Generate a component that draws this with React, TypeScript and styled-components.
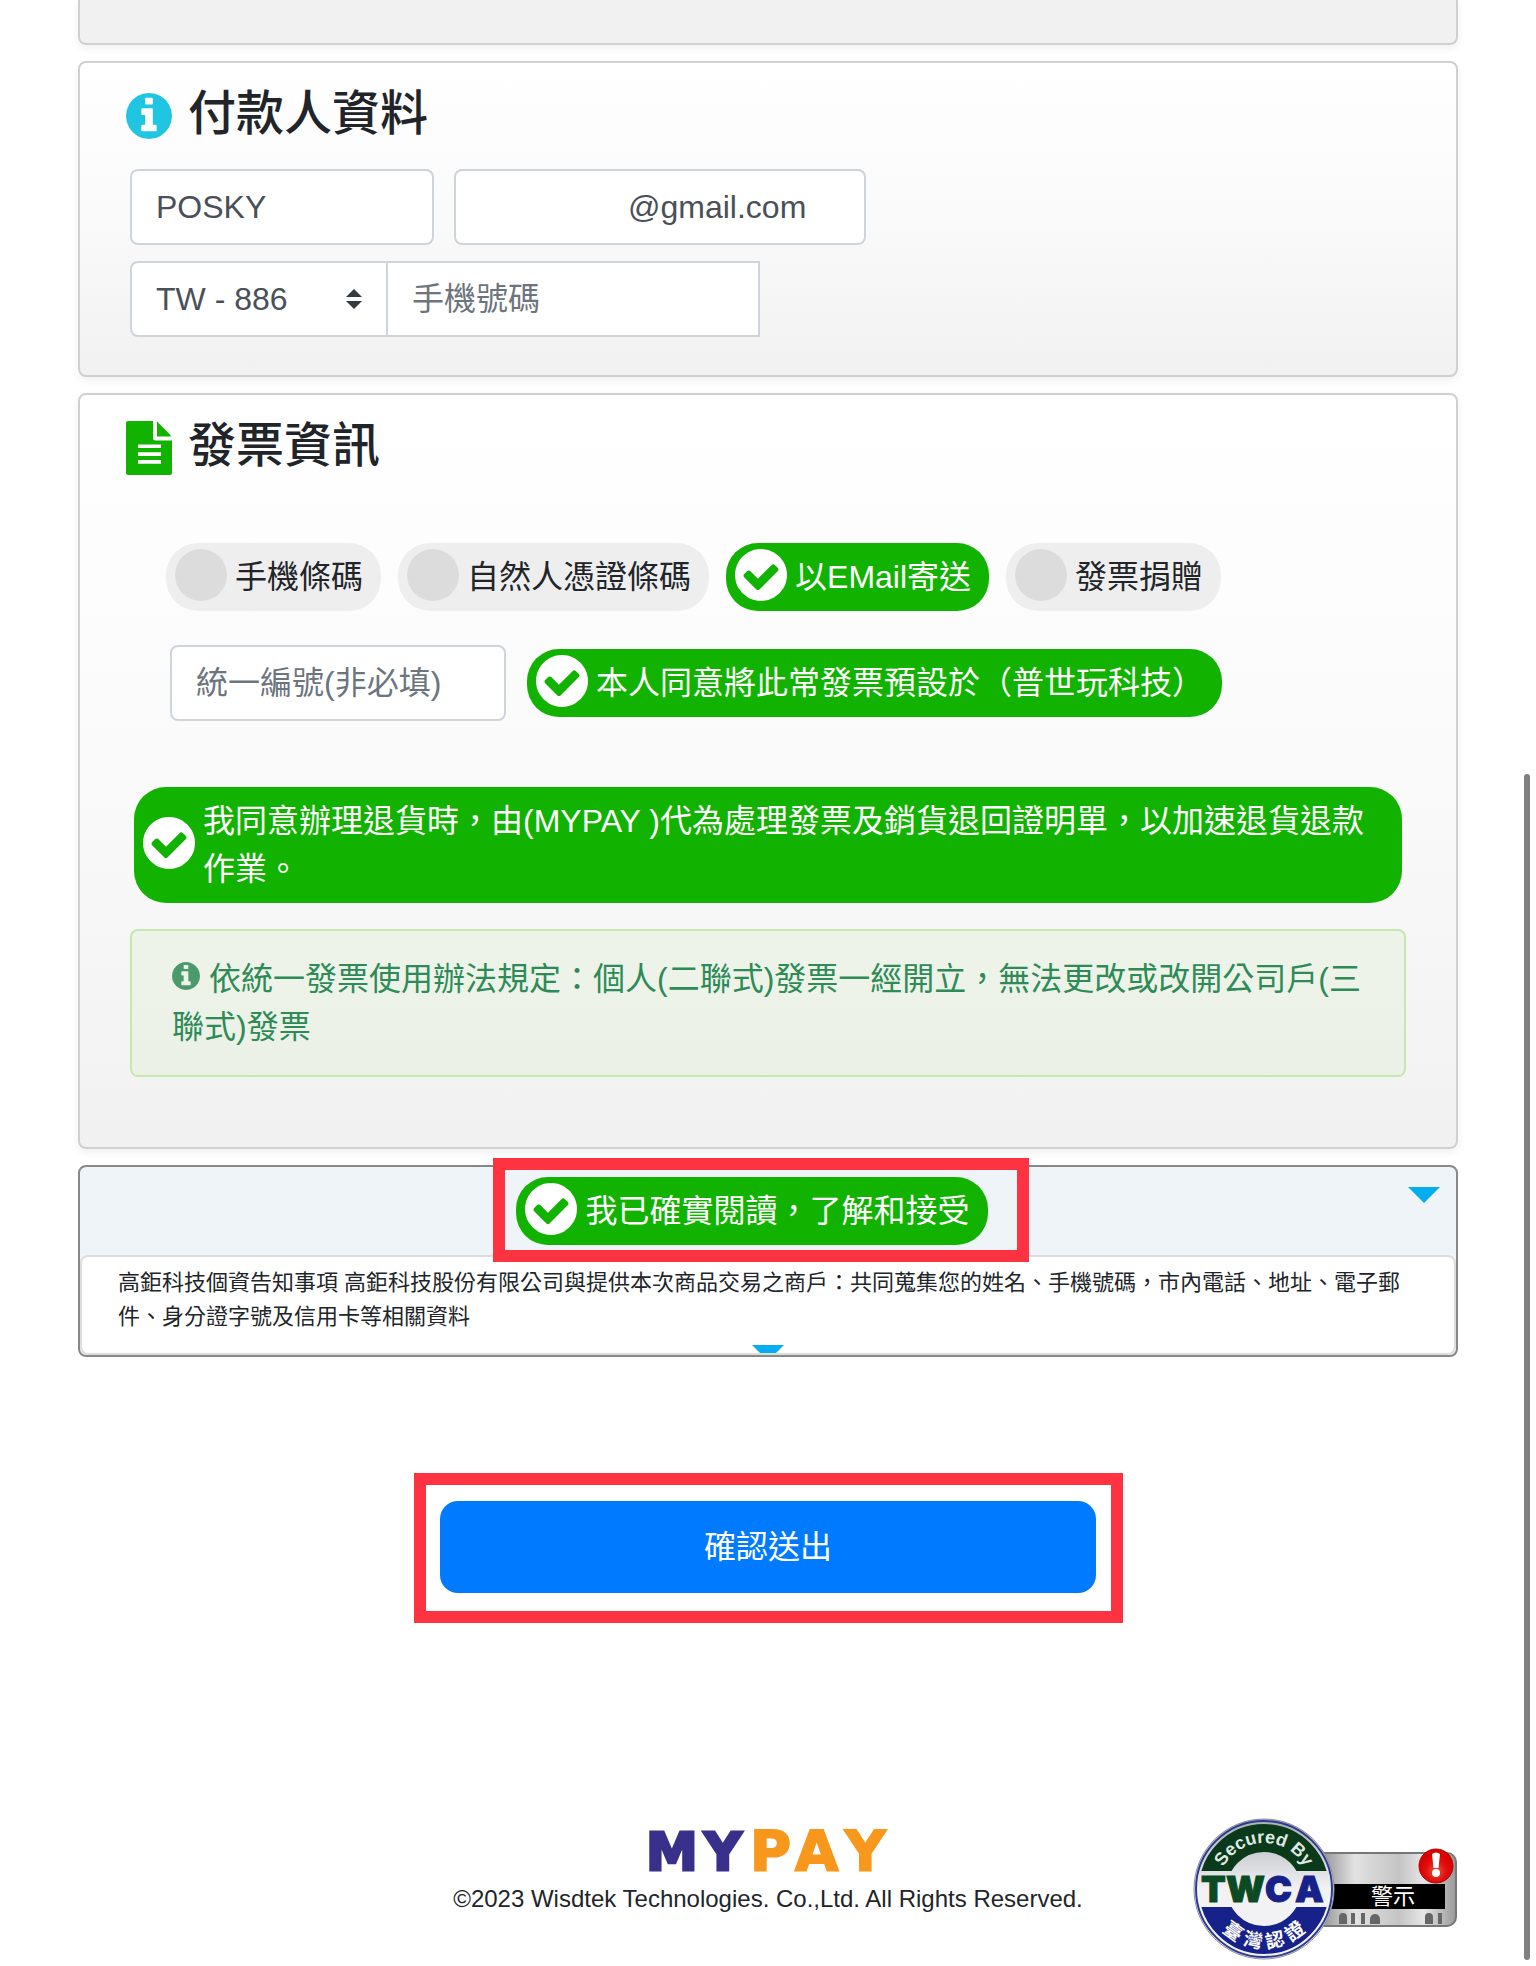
import React from "react";
import styled, { createGlobalStyle, css } from "styled-components";

const GlobalStyle = createGlobalStyle`
  *, *::before, *::after { box-sizing: border-box; }
  body {
    margin: 0;
    background: #fff;
    color: #212529;
    font-family: "Liberation Sans", "Noto Sans CJK TC", sans-serif;
    font-size: 32px;
    line-height: 48px;
  }
  input, select, button { font: inherit; margin: 0; }
`;

const green = "#12b200";
const fieldBorder = "#ced4da";

const Page = styled.main`
  display: flex;
  flex-direction: column;
  gap: 16px;
  padding: 0 78px 4px;
`;

const Card = styled.section`
  padding: 22px 50px 38px;
  border: 2px solid #d0d0d0;
  border-radius: 8px;
  background: linear-gradient(#fff, #fafafa 50%, #f1f1f1);
  box-shadow: 0 4px 8px rgba(0, 0, 0, 0.06);
`;

const PreviousCard = styled(Card)`
  height: 45px;
  padding: 0;
  border-top: 0;
  border-radius: 0 0 8px 8px;
  background: #f1f1f1;
`;

const InvoiceCard = styled(Card)`
  padding-bottom: 70px;
`;

const Title = styled.h2`
  display: flex;
  align-items: center;
  gap: 16px;
  margin: 0 0 26px -4px;
  font-size: 48px;
  line-height: 58px;
  font-weight: 500;

  svg {
    flex: none;
    margin-top: 4px;
  }
`;

const FieldRow = styled.div`
  display: flex;
  gap: 20px;
  margin-bottom: 16px;
`;

const PhoneGroup = styled.div`
  display: flex;
`;

const field = css`
  height: 76px;
  padding: 12px 24px;
  border: 2px solid ${fieldBorder};
  border-radius: 8px;
  background: #fff;
  color: #495057;
  line-height: 48px;
`;

const Input = styled.input<{ $width: number; $lead?: number; $square?: boolean }>`
  ${field}
  width: ${(p) => p.$width}px;
  ${(p) => p.$lead && `padding-left: ${p.$lead}px;`}
  ${(p) => p.$square && "border-radius: 0; margin-left: -2px;"}

  &::placeholder {
    color: #6c757d;
    opacity: 1;
  }
`;

const SelectBox = styled.div`
  position: relative;

  svg {
    position: absolute;
    right: 26px;
    top: 28px;
    pointer-events: none;
  }
`;

const Select = styled.select`
  ${field}
  width: 258px;
  border-radius: 8px 0 0 8px;
  appearance: none;
`;

const PillRow = styled.div`
  display: flex;
  flex-wrap: wrap;
  gap: 17px;
  margin: 68px 36px 34px;
`;

const TaxRow = styled.div`
  display: flex;
  align-items: center;
  gap: 21px;
  margin: 0 40px 66px;
`;

const Pill = styled.label<{ $on?: boolean; $block?: boolean }>`
  display: ${(p) => (p.$block ? "flex" : "inline-flex")};
  align-items: center;
  gap: 8px;
  margin: ${(p) => (p.$block ? "0 4px 26px" : "0")};
  padding: 10px 18px 10px 9px;
  border-radius: 32px;
  background: ${(p) => (p.$on ? green : "#eee")};
  color: ${(p) => (p.$on ? "#fff" : "#212529")};
  text-align: left;
  cursor: pointer;

  svg {
    flex: none;
    margin: -4px 0 0;
  }
`;

const HiddenInput = styled.input`
  position: absolute;
  width: 1px;
  height: 1px;
  opacity: 0;
  pointer-events: none;
`;

const Dot = styled.span`
  flex: none;
  width: 52px;
  height: 52px;
  margin: -4px 0 0;
  border-radius: 50%;
  background: #dcdcdc;
`;

const Note = styled.p`
  margin: 0;
  padding: 24px 40px;
  border: 2px solid #c5e8ab;
  border-radius: 8px;
  background: rgba(203, 236, 184, 0.2);
  color: #2e8b57;

  svg {
    margin-right: 9px;
    opacity: 0.85;
  }
`;

const Terms = styled.section`
  border: 2px solid #888;
  border-radius: 8px;
  background: #eff4f9;
`;

const TermsHeader = styled.div`
  position: relative;
  display: flex;
  justify-content: center;
  padding: 10px 32px 10px 0;
`;

const Triangle = styled.span`
  display: block;
  width: 32px;
  height: 16px;
  background: #06aef0;
  clip-path: polygon(0 0, 100% 0, 50% 100%);
`;

const ToggleButton = styled.button`
  position: absolute;
  top: 20px;
  right: 16px;
  padding: 0;
  border: 0;
  background: none;
  cursor: pointer;
`;

const TermsBody = styled.div`
  height: 100px;
  padding: 9px 36px 0;
  overflow: hidden;
  border: 2px solid #ddd;
  border-radius: 8px;
  background: #fff;
  font-size: 22px;
  line-height: 34px;

  p {
    margin: 0 0 11px;
  }

  ${Triangle} {
    margin: 0 auto;
  }
`;

const Marked = styled.div<{ $inset: string }>`
  position: relative;
  display: flex;

  &::after {
    content: "";
    position: absolute;
    inset: ${(p) => p.$inset};
    z-index: 1;
    border: 12px solid #fe3342;
    pointer-events: none;
  }
`;

const SubmitArea = styled.div`
  display: flex;
  justify-content: center;
  margin-top: 128px;
`;

const SubmitButton = styled.button`
  width: 656px;
  height: 92px;
  border: 0;
  border-radius: 18px;
  background: #007bff;
  color: #fff;
  cursor: pointer;
`;

const Footer = styled.footer`
  display: grid;
  grid-template-columns: 1fr auto 1fr;
  align-items: start;
  margin-top: 208px;
`;

const Brand = styled.div`
  display: flex;
  flex-direction: column;
  align-items: center;
  grid-column: 2;
  font-size: 24px;
  line-height: 36px;

  p {
    margin: -6px 0 0;
  }
`;

const SealLink = styled.a`
  justify-self: end;
  display: block;
  height: 144px;
`;

const ScrollThumb = styled.div`
  position: fixed;
  top: 774px;
  right: 6px;
  bottom: 6px;
  width: 6px;
  border-radius: 3px;
  background: #808080;
`;

const disc =
  "M1664 896q0 209-103 385.500t-279.500 279.500-385.500 103-385.500-103-279.500-279.500-103-385.500 103-385.500 279.500-279.500 385.500-103 385.500 103 279.500 279.500 103 385.500z";

function InfoIcon({ size, color = "currentColor" }: { size: number; color?: string }) {
  return (
    <svg width={size} height={size} viewBox="128 128 1536 1536" fill={color} aria-hidden="true">
      <path
        d={
          "M1152 1376v-160q0-14-9-23t-23-9h-96v-512q0-14-9-23t-23-9h-320q-14 0-23 9t-9 23v160q0 14 9 23t23 9h96v320h-96q-14 0-23 9t-9 23v160q0 14 9 23t23 9h448q14 0 23-9t9-23zM1024 480v-160q0-14-9-23t-23-9h-192q-14 0-23 9t-9 23v160q0 14 9 23t23 9h192q14 0 23-9t9-23z" +
          disc
        }
      />
    </svg>
  );
}

function CheckIcon() {
  return (
    <svg width="52" height="52" viewBox="128 128 1536 1536" fill="currentColor" aria-hidden="true">
      <path
        d={
          "M1412 734q0-28-18-46l-91-90q-19-19-45-19t-45 19l-408 407-226-226q-19-19-45-19t-45 19l-91 90q-18 18-18 46 0 27 18 45l362 362q19 19 45 19 27 0 46-19l543-543q18-18 18-45z" +
          disc
        }
      />
    </svg>
  );
}

function FileIcon() {
  return (
    <svg width="46" height="54" viewBox="0 0 46 54" fill={green} aria-hidden="true">
      <path
        fillRule="evenodd"
        d="M2 0H27V17A2.500 2.500 0 0 0 29.500 19.500H46V52A2 2 0 0 1 44 54H2A2 2 0 0 1 0 52V2A2 2 0 0 1 2 0ZM12 23.500V27H35V23.500ZM12 31.300V35H35V31.300ZM12 39V42.700H35V39Z"
      />
      <path d="M31 0.500Q32 1 33 2.500L43.500 13Q44.500 14 45 15.500H31Z" />
    </svg>
  );
}

function Choice(props: { type: "radio" | "checkbox"; label: string; on?: boolean; block?: boolean }) {
  return (
    <Pill $on={props.on} $block={props.block}>
      <HiddenInput
        type={props.type}
        name={props.type === "radio" ? "invoice" : undefined}
        defaultChecked={props.on}
      />
      {props.on ? <CheckIcon /> : <Dot />}
      <span>{props.label}</span>
    </Pill>
  );
}

function Logo() {
  return (
    <svg width="260" height="70" viewBox="-10 -11 260 70" role="img" aria-label="MYPAY">
      <g fontFamily="DejaVu Sans, sans-serif" fontWeight="700">
        <text x="-2 56" y="42" fontSize="52" fill="#38308a" stroke="#38308a" strokeWidth="3">MY</text>
        <text x="102 147 197" y="42" fontSize="56" fill="#f7981d" stroke="#f7981d" strokeWidth="2">PAY</text>
      </g>
    </svg>
  );
}

function Seal() {
  return (
    <svg width="265" height="144" viewBox="0 0 265 144" role="img" aria-label="TWCA">
      <defs>
        <linearGradient id="plate" x1="0" x2="1">
          <stop offset="0.1" stopColor="#777" />
          <stop offset="0.38" stopColor="#e2e2e2" />
          <stop offset="0.65" stopColor="#c4c4c4" />
          <stop offset="0.8" stopColor="#e6e6e6" />
          <stop offset="1" stopColor="#999" />
        </linearGradient>
        <linearGradient id="disc" x1="0" y1="0" x2="0" y2="1">
          <stop offset="0" stopColor="#a9adb5" />
          <stop offset="0.5" stopColor="#f2f2f4" />
          <stop offset="1" stopColor="#f2f2f4" />
        </linearGradient>
        <radialGradient id="alert" cy="0.65">
          <stop offset="0" stopColor="#e8553c" />
          <stop offset="0.6" stopColor="#e01010" />
          <stop offset="1" stopColor="#d00" />
        </radialGradient>
        <path id="arcTop" d="M25 72A46 46 0 0 1 117 72" />
        <clipPath id="upper"><rect x="0" y="0" width="142" height="54" /></clipPath>
        <clipPath id="lower"><rect x="0" y="90" width="142" height="54" /></clipPath>
      </defs>
      <rect x="100" y="36" width="163" height="73" rx="9" fill="url(#plate)" stroke="#777" strokeWidth="2" />
      <rect x="110" y="67" width="142" height="25" fill="#000" />
      <path
        fill="#666"
        d="M146 107V100a4 4 0 0 1 8 0V107ZM158 107V96h4V107ZM168 107V96h4V107ZM177 107V102a5 5 0 0 1 10 0V107ZM232 107V100a4 4 0 0 1 8 0V107ZM245 107V96h4V107Z"
      />
      <text x="178" y="87" fontSize="22" fill="#fff">警示</text>
      <circle cx="243" cy="49" r="17" fill="url(#alert)" stroke="#b40000" />
      <path d="M239 37q4-3 8 0l-1.500 14h-5Z" fill="#fff" />
      <circle cx="243" cy="56" r="4" fill="#fff" />
      <circle cx="71" cy="72" r="70" fill="url(#disc)" stroke="#8a8f9c" strokeWidth="1" />
      <circle cx="71" cy="72" r="68" fill="none" stroke="#2b3a90" strokeWidth="2" />
      <circle cx="71" cy="72" r="51" fill="none" stroke="#0b3a1b" strokeWidth="28" clipPath="url(#upper)" />
      <circle cx="71" cy="72" r="51" fill="none" stroke="#17218a" strokeWidth="28" clipPath="url(#lower)" />
      <text fontSize="18" fontWeight="700" fill="#dfe8e2" textAnchor="middle">
        <textPath href="#arcTop" startOffset="50%">Secured By</textPath>
      </text>
      <g fontSize="19" fontWeight="700" fill="#fff" textAnchor="middle">
        <text transform="rotate(36 71 72)" x="71" y="131">臺</text>
        <text transform="rotate(12 71 72)" x="71" y="131">灣</text>
        <text transform="rotate(-12 71 72)" x="71" y="131">認</text>
        <text transform="rotate(-36 71 72)" x="71" y="131">證</text>
      </g>
      <g fontFamily="Inter, sans-serif" fontSize="36" fontWeight="900" strokeWidth="1">
        <text x="8 33" y="85" fill="#0b4a22" stroke="#0b4a22">TW</text>
        <text x="72 102" y="85" fill="#17218a" stroke="#17218a">CA</text>
      </g>
    </svg>
  );
}

export default function App() {
  return (
    <>
      <GlobalStyle />
      <Page>
        <PreviousCard />

        <Card>
          <Title>
            <InfoIcon size={46} color="#20c5e2" />
            付款人資料
          </Title>
          <FieldRow>
            <Input $width={304} aria-label="姓名" defaultValue="POSKY" />
            <Input $width={412} $lead={172} aria-label="EMail" defaultValue="@gmail.com" />
          </FieldRow>
          <PhoneGroup>
            <SelectBox>
              <Select aria-label="國碼">
                <option>TW - 886</option>
              </Select>
              <svg width="16" height="20" viewBox="0 0 16 20" fill="#343a40" aria-hidden="true">
                <path d="M0 8L8 0L16 8ZM0 12H16L8 20Z" />
              </svg>
            </SelectBox>
            <Input $width={374} $square type="tel" aria-label="手機號碼" placeholder="手機號碼" />
          </PhoneGroup>
        </Card>

        <InvoiceCard>
          <Title>
            <FileIcon />
            發票資訊
          </Title>
          <PillRow>
            <Choice type="radio" label="手機條碼" />
            <Choice type="radio" label="自然人憑證條碼" />
            <Choice type="radio" label="以EMail寄送" on />
            <Choice type="radio" label="發票捐贈" />
          </PillRow>
          <TaxRow>
            <Input $width={336} aria-label="統一編號" placeholder="統一編號(非必填)" />
            <Choice type="checkbox" label="本人同意將此常發票預設於（普世玩科技）" on />
          </TaxRow>
          <Choice
            type="checkbox"
            label="我同意辦理退貨時，由(MYPAY )代為處理發票及銷貨退回證明單，以加速退貨退款作業。"
            on
            block
          />
          <Note>
            <InfoIcon size={28} />
            依統一發票使用辦法規定：個人(二聯式)發票一經開立，無法更改或改開公司戶(三聯式)發票
          </Note>
        </InvoiceCard>

        <Terms>
          <TermsHeader>
            <Marked $inset="-19px -41px -17px -23px">
              <Choice type="checkbox" label="我已確實閱讀，了解和接受" on />
            </Marked>
            <ToggleButton type="button" aria-label="展開">
              <Triangle />
            </ToggleButton>
          </TermsHeader>
          <TermsBody>
            <p>
              高鉅科技個資告知事項 高鉅科技股份有限公司與提供本次商品交易之商戶：共同蒐集您的姓名、手機號碼，市內電話、地址、電子郵件、身分證字號及信用卡等相關資料
            </p>
            <Triangle />
          </TermsBody>
        </Terms>

        <SubmitArea>
          <Marked $inset="-28px -27px -30px -26px">
            <SubmitButton type="submit">確認送出</SubmitButton>
          </Marked>
        </SubmitArea>

        <Footer>
          <Brand>
            <Logo />
            <p>©2023 Wisdtek Technologies. Co.,Ltd. All Rights Reserved.</p>
          </Brand>
          <SealLink href="#seal" aria-label="TWCA">
            <Seal />
          </SealLink>
        </Footer>
      </Page>
      <ScrollThumb />
    </>
  );
}
